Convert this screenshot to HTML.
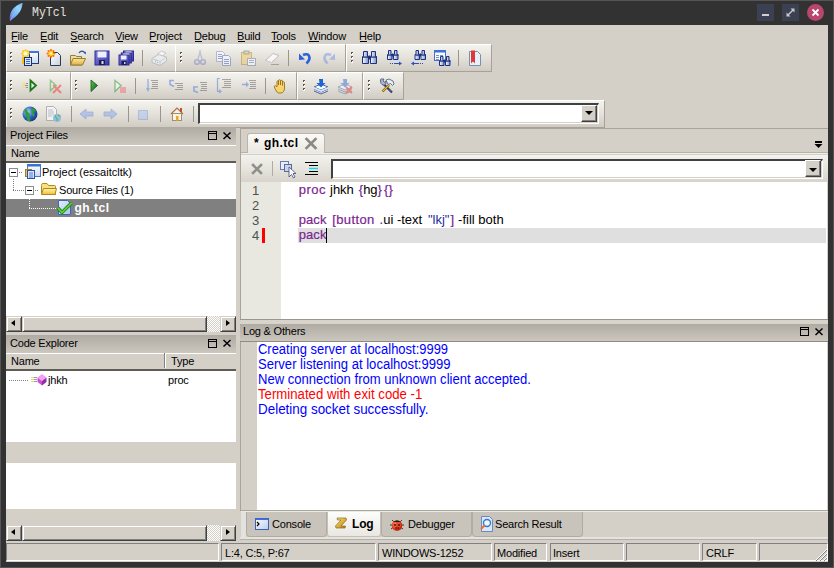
<!DOCTYPE html>
<html><head><meta charset="utf-8">
<style>
*{box-sizing:border-box;margin:0;padding:0}
html,body{width:834px;height:568px;overflow:hidden;background:#323232;font-family:"Liberation Sans",sans-serif;font-size:11px;color:#000}
div,span,svg{position:absolute}
.t{white-space:nowrap;line-height:1;letter-spacing:-.2px}
.tb{background:linear-gradient(#f5f3ef,#e4e1da 50%,#d0ccc4);border-top:1px solid #fff;border-left:1px solid #fff;border-bottom:1px solid #a6a299;border-right:1px solid #a6a299}
.grip{width:3px;height:12px;background:repeating-linear-gradient(#6f6b64 0 2px,transparent 2px 4px)}
.sep{width:2px;height:17px;border-left:1px solid #aca89f;border-right:1px solid #fff}
.dh{background:linear-gradient(#afaba3,#cbc7bf)}
.hdr{background:#d4d0c8;border-top:1px solid #fff;border-bottom:2px solid #5f5c56}
.sunk{border-top:1px solid #808080;border-left:1px solid #808080;border-right:1px solid #fff;border-bottom:1px solid #fff}
.raised{background:#d4d0c8;border-top:1px solid #fff;border-left:1px solid #fff;border-right:1px solid #404040;border-bottom:1px solid #404040;box-shadow:inset -1px -1px #808080}
.combo{background:#fff;border-top:2px solid #404040;border-left:2px solid #404040;border-right:1px solid #fff;border-bottom:1px solid #fff;box-shadow:inset -1px -1px #d4d0c8}
.arrow{width:0;height:0;border-left:4px solid transparent;border-right:4px solid transparent;border-top:4px solid #000}
.b3{background:#d4d0c8;border:1px solid;border-color:#d4d0c8 #404040 #404040 #d4d0c8;box-shadow:inset 1px 1px #fff,inset -1px -1px #808080}
.chk{background-color:#fff;background-image:linear-gradient(45deg,#d4d0c8 25%,transparent 25%,transparent 75%,#d4d0c8 75%),linear-gradient(45deg,#d4d0c8 25%,transparent 25%,transparent 75%,#d4d0c8 75%);background-size:2px 2px;background-position:0 0,1px 1px}
.kw{color:#7b2b8c;font-weight:bold}
.cd{font-size:13px;letter-spacing:0}
.k{font-weight:normal;-webkit-text-stroke:.2px #7b2590;letter-spacing:.1px}
.log{letter-spacing:0;font-size:14px;color:#0000ff;transform:scaleX(.925);transform-origin:0 0}
</style></head><body>
<!-- outer frame -->
<div style="left:0;top:0;width:834px;height:568px;border:1px solid #555;background:#323232"></div>
<!-- title -->
<svg style="left:0;top:0" width="30" height="25" viewBox="0 0 30 25"><defs><linearGradient id="fg" x1="0" y1="1" x2="1" y2="0"><stop offset="0" stop-color="#7040d0"/><stop offset=".25" stop-color="#68a8f0"/><stop offset=".7" stop-color="#90d8ff"/><stop offset="1" stop-color="#60b8f0"/></linearGradient></defs><path d="M10 21 C9 16 11 10 15 7 C17.5 5 20 3.5 22.5 3 C22.5 6 21.5 9 20 11.5 C18 15 14 18 10 21 Z" fill="url(#fg)"/><path d="M10.5 20.5 C13 15 17 9 22 3.5" stroke="#c0b8e8" stroke-width=".8" fill="none" opacity=".8"/></svg>
<span class="t" style="left:32px;top:6px;font-family:'Liberation Mono',monospace;font-size:13.5px;letter-spacing:0;color:#e6e2dc;transform:scaleX(.85);transform-origin:0 0">MyTcl</span>
<div style="left:757px;top:4px;width:17px;height:17px;background:#3b4152"></div>
<div style="left:762px;top:14px;width:7px;height:2px;background:#d0d0d0"></div>
<div style="left:782px;top:4px;width:17px;height:17px;background:#3b4152"></div>
<svg style="left:782px;top:4px" width="17" height="17"><path d="M5.5 11.5 L11.5 5.5" stroke="#c8c8c8" stroke-width="1.4"/><path d="M8.5 4.5 H12.5 V8.5 Z M4.5 8.5 V12.5 H8.5 Z" fill="#c8c8c8"/></svg>
<div style="left:807px;top:4px;width:17px;height:17px;border-radius:50%;background:#b8466e"></div>
<svg style="left:807px;top:4px" width="17" height="17"><path d="M5.5 5.5 L11.5 11.5 M11.5 5.5 L5.5 11.5" stroke="#fff" stroke-width="1.8"/></svg>

<!-- window body -->
<div style="left:6px;top:25px;width:822px;height:537px;background:#d4d0c8"></div>

<!-- menubar -->
<span class="t" style="left:11px;top:31px">File</span>
<span class="t" style="left:40px;top:31px">Edit</span>
<span class="t" style="left:70px;top:31px">Search</span>
<span class="t" style="left:115px;top:31px">View</span>
<span class="t" style="left:149px;top:31px">Project</span>
<span class="t" style="left:194px;top:31px">Debug</span>
<span class="t" style="left:237px;top:31px">Build</span>
<span class="t" style="left:271px;top:31px">Tools</span>
<span class="t" style="left:308px;top:31px">Window</span>
<span class="t" style="left:359px;top:31px">Help</span>

<div style="left:12px;top:41px;width:6px;height:1px;background:#000"></div><div style="left:41px;top:41px;width:6px;height:1px;background:#000"></div><div style="left:71px;top:41px;width:7px;height:1px;background:#000"></div><div style="left:116px;top:41px;width:7px;height:1px;background:#000"></div><div style="left:150px;top:41px;width:7px;height:1px;background:#000"></div><div style="left:195px;top:41px;width:7px;height:1px;background:#000"></div><div style="left:238px;top:41px;width:7px;height:1px;background:#000"></div><div style="left:272px;top:41px;width:7px;height:1px;background:#000"></div><div style="left:309px;top:41px;width:10px;height:1px;background:#000"></div><div style="left:360px;top:41px;width:7px;height:1px;background:#000"></div>
<!-- toolbars row1 -->
<div class="tb" style="left:6px;top:44px;width:170px;height:28px"></div>
<div class="tb" style="left:175px;top:44px;width:171px;height:28px"></div>
<div class="tb" style="left:346px;top:44px;width:146px;height:28px"></div>
<!-- row2 -->
<div class="tb" style="left:6px;top:72px;width:65px;height:28px"></div>
<div class="tb" style="left:71px;top:72px;width:226px;height:28px"></div>
<div class="tb" style="left:297px;top:72px;width:66px;height:28px"></div>
<div class="tb" style="left:363px;top:72px;width:41px;height:28px"></div>
<!-- row3 -->
<div class="tb" style="left:6px;top:100px;width:599px;height:28px"></div>
<div class="combo" style="left:198px;top:103px;width:401px;height:21px"></div>
<div class="raised" style="left:581px;top:105px;width:16px;height:17px"></div>
<div class="arrow" style="left:585px;top:111px"></div>

<!-- LEFT DOCK: Project Files -->
<div class="dh" style="left:6px;top:127px;width:230px;height:18px"></div>
<span class="t" style="left:10px;top:130px">Project Files</span>
<div class="hdr" style="left:6px;top:145px;width:230px;height:18px"></div>
<span class="t" style="left:11px;top:148px">Name</span>
<div style="left:6px;top:163px;width:230px;height:153px;background:#fff"></div>
<div style="left:6px;top:199px;width:230px;height:18px;background:#808080"></div>
<span class="t" style="left:42px;top:167px;letter-spacing:0">Project (essaitcltk)</span>
<span class="t" style="left:59px;top:185px">Source Files (1)</span>
<span class="t" style="left:74.5px;top:202px;font-weight:bold;font-size:12px;color:#fff;letter-spacing:.5px">gh.tcl</span>
<!-- hscroll 1 -->
<div class="chk" style="left:6px;top:316px;width:230px;height:16px;background:#d4d0c8"></div><div class="chk" style="left:206px;top:316px;width:15px;height:16px"></div><div class="b3" style="left:6px;top:316px;width:16px;height:16px"></div><div style="left:11px;top:320px;width:0;height:0;border-top:3.5px solid transparent;border-bottom:3.5px solid transparent;border-right:4px solid #000"></div><div class="b3" style="left:22px;top:316px;width:185px;height:16px"></div><div class="b3" style="left:220px;top:316px;width:16px;height:16px"></div><div style="left:226px;top:320px;width:0;height:0;border-top:3.5px solid transparent;border-bottom:3.5px solid transparent;border-left:4px solid #000"></div>
<div class="chk" style="left:6px;top:525px;width:230px;height:16px;background:#d4d0c8"></div><div class="chk" style="left:206px;top:525px;width:15px;height:16px"></div><div class="b3" style="left:6px;top:525px;width:16px;height:16px"></div><div style="left:11px;top:529px;width:0;height:0;border-top:3.5px solid transparent;border-bottom:3.5px solid transparent;border-right:4px solid #000"></div><div class="b3" style="left:22px;top:525px;width:185px;height:16px"></div><div class="b3" style="left:220px;top:525px;width:16px;height:16px"></div><div style="left:226px;top:529px;width:0;height:0;border-top:3.5px solid transparent;border-bottom:3.5px solid transparent;border-left:4px solid #000"></div>


<!-- LEFT DOCK: Code Explorer -->
<div class="dh" style="left:6px;top:335px;width:230px;height:18px"></div>
<span class="t" style="left:10px;top:338px">Code Explorer</span>
<div class="hdr" style="left:6px;top:353px;width:230px;height:18px"></div>
<span class="t" style="left:11px;top:356px">Name</span>
<span class="t" style="left:171px;top:356px">Type</span>
<div style="left:6px;top:371px;width:230px;height:71px;background:#fff"></div>
<span class="t" style="left:48px;top:375px">jhkh</span>
<span class="t" style="left:168px;top:375px">proc</span>
<div style="left:6px;top:463px;width:230px;height:46px;background:#fff"></div>

<!-- EDITOR -->
<div style="left:240px;top:128px;width:588px;height:1px;background:#a8a49c"></div>
<div style="left:240px;top:128px;width:1px;height:191px;background:#a8a49c"></div>
<div style="left:241px;top:152px;width:587px;height:1px;background:#b8b2a6"></div>
<div style="left:241px;top:153px;width:587px;height:1px;background:#f0eee8"></div>
<!-- tab -->
<div style="left:247px;top:133px;width:78px;height:20px;background:linear-gradient(#fbfaf7,#ebe8e1);border:1px solid #b9b5ac;border-bottom:none;border-radius:3px 3px 0 0"></div>
<span class="t" style="left:254px;top:137px;font-weight:bold;font-size:12px">*</span><span class="t" style="left:264px;top:137px;font-weight:bold;font-size:12px;letter-spacing:.4px">gh.tcl</span>
<!-- editor toolbar -->
<div style="left:241px;top:155px;width:587px;height:27px;background:linear-gradient(#f4f2ee,#e4e1da 60%,#d8d4cc)"></div>
<div class="combo" style="left:331px;top:159px;width:492px;height:20px"></div>
<div class="raised" style="left:805px;top:160px;width:16px;height:17px"></div>
<div class="arrow" style="left:809px;top:168px"></div>
<!-- code -->
<div style="left:241px;top:182px;width:586px;height:137px;background:#fff"></div>
<div style="left:241px;top:182px;width:40px;height:137px;background:#e8e7e0"></div>
<div style="left:298px;top:228px;width:528px;height:15px;background:#dfdfdf"></div>
<div style="left:262px;top:228px;width:3px;height:15px;background:#f00"></div>
<span class="t" style="left:252px;top:184px;font-size:13px;color:#505050">1</span>
<span class="t" style="left:252px;top:199px;font-size:13px;color:#505050">2</span>
<span class="t" style="left:252px;top:214px;font-size:13px;color:#505050">3</span>
<span class="t" style="left:252px;top:229px;font-size:13px;color:#505050">4</span>
<span class="t cd k" style="left:298.8px;top:183px;color:#7b2590;letter-spacing:.5px">proc</span>
<span class="t cd" style="left:330px;top:183px;color:#000">jhkh</span>
<span class="t cd" style="left:358.7px;top:183px;color:#7b2590"><b class="k">{</b><span style="position:static;color:#000">hg</span><b class="k">}</b></span>
<span class="t cd k" style="left:384px;top:183px;color:#7b2590">{}</span>
<span class="t cd k" style="left:298.7px;top:213px;color:#7b2590">pack</span>
<span class="t cd k" style="left:332.2px;top:213px;color:#7b2590;letter-spacing:.4px">[button</span>
<span class="t cd" style="left:379.5px;top:213px;color:#7b2590"><b class="k">.</b><span style="position:static;color:#000">ui</span></span>
<span class="t cd" style="left:396.9px;top:213px;color:#000">-text</span>
<span class="t cd" style="left:427.9px;top:213px;color:#1c2c9c">&quot;lkj&quot;</span>
<span class="t cd k" style="left:450.4px;top:213px;color:#7b2590">]</span>
<span class="t cd" style="left:458.1px;top:213px;color:#000">-fill both</span>
<span class="t cd k" style="left:298.7px;top:228px;color:#7b2590">pack</span>
<div style="left:326px;top:228px;width:1px;height:15px;background:#000"></div>

<!-- LOG & OTHERS -->
<div style="left:240px;top:319px;width:588px;height:1px;background:#9a968e"></div><div style="left:240px;top:320px;width:588px;height:4px;background:#d8d4cc"></div><div class="dh" style="left:240px;top:324px;width:588px;height:17px"></div>
<span class="t" style="left:243px;top:326px">Log &amp; Others</span>
<div style="left:240px;top:341px;width:588px;height:1px;background:#8e8a84"></div>
<div style="left:241px;top:342px;width:586px;height:168px;background:#fff"></div>
<div style="left:241px;top:342px;width:16px;height:168px;background:#d4d0c8"></div><div style="left:240px;top:342px;width:1px;height:168px;background:#a8a49c"></div>
<span class="t log" style="transform:scaleX(0.9250);left:258px;top:342px">Creating server at localhost:9999</span>
<span class="t log" style="transform:scaleX(0.9333);left:258px;top:357px">Server listening at localhost:9999</span>
<span class="t log" style="transform:scaleX(0.9324);left:258px;top:372px">New connection from unknown client accepted.</span>
<span class="t log" style="transform:scaleX(0.9426);left:258px;top:387px;color:#ff0000">Terminated with exit code -1</span>
<span class="t log" style="transform:scaleX(0.9583);left:258px;top:402px">Deleting socket successfully.</span>

<!-- bottom tabs -->
<div style="left:240px;top:510px;width:588px;height:1px;background:#aaa69e"></div>
<div style="left:241px;top:511px;width:587px;height:1px;background:#ebe9e3"></div>
<div style="left:241px;top:512px;width:5px;height:26px;background:#e4e2dc"></div>
<div style="left:240px;top:537px;width:588px;height:2px;background:#e6e3dd"></div>
<div style="left:240px;top:539px;width:588px;height:1px;background:#b5b1a9"></div>
<div style="left:246px;top:512px;width:81px;height:25px;background:#c8c4bb;border-radius:0 0 4px 4px;border:1px solid #b0aca3;border-top:none"></div>
<div style="left:381px;top:512px;width:91px;height:25px;background:#c8c4bb;border-radius:0 0 4px 4px;border:1px solid #b0aca3;border-top:none"></div>
<div style="left:472px;top:512px;width:111px;height:25px;background:#c8c4bb;border-radius:0 0 4px 4px;border:1px solid #b0aca3;border-top:none"></div>
<div style="left:327px;top:512px;width:54px;height:25px;background:linear-gradient(#fdfdfb,#e9e7e1);border-radius:0 0 3px 3px;border:1px solid #c4c0b8;border-top:none"></div>
<span class="t" style="left:272px;top:519px">Console</span>
<span class="t" style="left:352px;top:518px;font-weight:bold;font-size:12px">Log</span>
<span class="t" style="left:408px;top:519px">Debugger</span>
<span class="t" style="left:495px;top:519px">Search Result</span>
<!-- status bar -->
<div class="sunk" style="left:6px;top:543px;width:213px;height:18px"></div>
<div class="sunk" style="left:221px;top:543px;width:155px;height:18px"></div>
<div class="sunk" style="left:378px;top:543px;width:114px;height:18px"></div>
<div class="sunk" style="left:494px;top:543px;width:53px;height:18px"></div>
<div class="sunk" style="left:550px;top:543px;width:74px;height:18px"></div>
<div class="sunk" style="left:626px;top:543px;width:74px;height:18px"></div>
<div class="sunk" style="left:702px;top:543px;width:55px;height:18px"></div>
<div class="sunk" style="left:759px;top:543px;width:69px;height:18px"></div>
<span class="t" style="left:225px;top:548px">L:4, C:5, P:67</span>
<span class="t" style="left:382px;top:548px">WINDOWS-1252</span>
<span class="t" style="left:497px;top:548px">Modified</span>
<span class="t" style="left:553px;top:548px">Insert</span>
<span class="t" style="left:706px;top:548px">CRLF</span>
<svg style="left:0;top:0" width="834" height="568"><path d="M10 52h2v1h-1v1h-1z" fill="#5a5650"/><rect x="11" y="53" width="1" height="1" fill="#fff"/><rect x="10" y="54" width="2" height="1" fill="#fff" opacity=".8"/><path d="M10 56h2v1h-1v1h-1z" fill="#5a5650"/><rect x="11" y="57" width="1" height="1" fill="#fff"/><rect x="10" y="58" width="2" height="1" fill="#fff" opacity=".8"/><path d="M10 60h2v1h-1v1h-1z" fill="#5a5650"/><rect x="11" y="61" width="1" height="1" fill="#fff"/><rect x="10" y="62" width="2" height="1" fill="#fff" opacity=".8"/><path d="M180 52h2v1h-1v1h-1z" fill="#5a5650"/><rect x="181" y="53" width="1" height="1" fill="#fff"/><rect x="180" y="54" width="2" height="1" fill="#fff" opacity=".8"/><path d="M180 56h2v1h-1v1h-1z" fill="#5a5650"/><rect x="181" y="57" width="1" height="1" fill="#fff"/><rect x="180" y="58" width="2" height="1" fill="#fff" opacity=".8"/><path d="M180 60h2v1h-1v1h-1z" fill="#5a5650"/><rect x="181" y="61" width="1" height="1" fill="#fff"/><rect x="180" y="62" width="2" height="1" fill="#fff" opacity=".8"/><path d="M351 52h2v1h-1v1h-1z" fill="#5a5650"/><rect x="352" y="53" width="1" height="1" fill="#fff"/><rect x="351" y="54" width="2" height="1" fill="#fff" opacity=".8"/><path d="M351 56h2v1h-1v1h-1z" fill="#5a5650"/><rect x="352" y="57" width="1" height="1" fill="#fff"/><rect x="351" y="58" width="2" height="1" fill="#fff" opacity=".8"/><path d="M351 60h2v1h-1v1h-1z" fill="#5a5650"/><rect x="352" y="61" width="1" height="1" fill="#fff"/><rect x="351" y="62" width="2" height="1" fill="#fff" opacity=".8"/><path d="M10 80h2v1h-1v1h-1z" fill="#5a5650"/><rect x="11" y="81" width="1" height="1" fill="#fff"/><rect x="10" y="82" width="2" height="1" fill="#fff" opacity=".8"/><path d="M10 84h2v1h-1v1h-1z" fill="#5a5650"/><rect x="11" y="85" width="1" height="1" fill="#fff"/><rect x="10" y="86" width="2" height="1" fill="#fff" opacity=".8"/><path d="M10 88h2v1h-1v1h-1z" fill="#5a5650"/><rect x="11" y="89" width="1" height="1" fill="#fff"/><rect x="10" y="90" width="2" height="1" fill="#fff" opacity=".8"/><path d="M75 80h2v1h-1v1h-1z" fill="#5a5650"/><rect x="76" y="81" width="1" height="1" fill="#fff"/><rect x="75" y="82" width="2" height="1" fill="#fff" opacity=".8"/><path d="M75 84h2v1h-1v1h-1z" fill="#5a5650"/><rect x="76" y="85" width="1" height="1" fill="#fff"/><rect x="75" y="86" width="2" height="1" fill="#fff" opacity=".8"/><path d="M75 88h2v1h-1v1h-1z" fill="#5a5650"/><rect x="76" y="89" width="1" height="1" fill="#fff"/><rect x="75" y="90" width="2" height="1" fill="#fff" opacity=".8"/><path d="M303 80h2v1h-1v1h-1z" fill="#5a5650"/><rect x="304" y="81" width="1" height="1" fill="#fff"/><rect x="303" y="82" width="2" height="1" fill="#fff" opacity=".8"/><path d="M303 84h2v1h-1v1h-1z" fill="#5a5650"/><rect x="304" y="85" width="1" height="1" fill="#fff"/><rect x="303" y="86" width="2" height="1" fill="#fff" opacity=".8"/><path d="M303 88h2v1h-1v1h-1z" fill="#5a5650"/><rect x="304" y="89" width="1" height="1" fill="#fff"/><rect x="303" y="90" width="2" height="1" fill="#fff" opacity=".8"/><path d="M368 80h2v1h-1v1h-1z" fill="#5a5650"/><rect x="369" y="81" width="1" height="1" fill="#fff"/><rect x="368" y="82" width="2" height="1" fill="#fff" opacity=".8"/><path d="M368 84h2v1h-1v1h-1z" fill="#5a5650"/><rect x="369" y="85" width="1" height="1" fill="#fff"/><rect x="368" y="86" width="2" height="1" fill="#fff" opacity=".8"/><path d="M368 88h2v1h-1v1h-1z" fill="#5a5650"/><rect x="369" y="89" width="1" height="1" fill="#fff"/><rect x="368" y="90" width="2" height="1" fill="#fff" opacity=".8"/><path d="M10 108h2v1h-1v1h-1z" fill="#5a5650"/><rect x="11" y="109" width="1" height="1" fill="#fff"/><rect x="10" y="110" width="2" height="1" fill="#fff" opacity=".8"/><path d="M10 112h2v1h-1v1h-1z" fill="#5a5650"/><rect x="11" y="113" width="1" height="1" fill="#fff"/><rect x="10" y="114" width="2" height="1" fill="#fff" opacity=".8"/><path d="M10 116h2v1h-1v1h-1z" fill="#5a5650"/><rect x="11" y="117" width="1" height="1" fill="#fff"/><rect x="10" y="118" width="2" height="1" fill="#fff" opacity=".8"/><rect x="142" y="50" width="1" height="16" fill="#9a968e"/><rect x="288" y="50" width="1" height="16" fill="#9a968e"/><rect x="458" y="50" width="1" height="16" fill="#9a968e"/><rect x="135" y="78" width="1" height="16" fill="#9a968e"/><rect x="265" y="78" width="1" height="16" fill="#9a968e"/><rect x="71" y="106" width="1" height="16" fill="#9a968e"/><rect x="128" y="106" width="1" height="16" fill="#9a968e"/><rect x="160" y="106" width="1" height="16" fill="#9a968e"/><rect x="193" y="106" width="1" height="16" fill="#9a968e"/></svg>
<svg style="left:0;top:0" width="834" height="568" viewBox="0 0 834 568">
<defs>
<linearGradient id="gBlueWin" x1="0" y1="0" x2="0" y2="1"><stop offset="0" stop-color="#fff"/><stop offset="1" stop-color="#c8d8f0"/></linearGradient>
<linearGradient id="gPage" x1="0" y1="0" x2="1" y2="1"><stop offset="0" stop-color="#fff"/><stop offset="1" stop-color="#c8d0e0"/></linearGradient>
<linearGradient id="gFold" x1="0" y1="0" x2="0" y2="1"><stop offset="0" stop-color="#f8e8a0"/><stop offset="1" stop-color="#e0b040"/></linearGradient>
<linearGradient id="gFloppy" x1="0" y1="0" x2="1" y2="1"><stop offset="0" stop-color="#8080e0"/><stop offset="1" stop-color="#3838a8"/></linearGradient>
<linearGradient id="gBino" x1="0" y1="0" x2="1" y2="0"><stop offset="0" stop-color="#fff"/><stop offset="1" stop-color="#7890c8"/></linearGradient>
<radialGradient id="gGlobe" cx=".35" cy=".35" r=".7"><stop offset="0" stop-color="#a8d0ff"/><stop offset=".6" stop-color="#2860c0"/><stop offset="1" stop-color="#183880"/></radialGradient>
<linearGradient id="gRun" x1="0" y1="0" x2="1" y2="1"><stop offset="0" stop-color="#60c060"/><stop offset="1" stop-color="#0a600a"/></linearGradient>
</defs>
<!-- grips -->
<g id="grips" fill="#6e6a62">
</g>
<!-- ROW1 -->
<!-- new project -->
<g transform="translate(20,48)">
 <rect x="9.5" y="3.5" width="9" height="12" fill="url(#gBlueWin)" stroke="#233a78"/>
 <rect x="9" y="3" width="10" height="2" fill="#3a78e0"/>
 <rect x="2" y="9" width="2.5" height="7" fill="#f0c020"/>
 <circle cx="5.5" cy="5.5" r="2.4000000000000004" fill="#fff0a0"/><circle cx="8.70" cy="5.50" r="1.1" fill="#f8c800"/><circle cx="7.76" cy="7.76" r="1.1" fill="#f8c800"/><circle cx="5.50" cy="8.70" r="1.1" fill="#f8c800"/><circle cx="3.24" cy="7.76" r="1.1" fill="#f8c800"/><circle cx="2.30" cy="5.50" r="1.1" fill="#f8c800"/><circle cx="3.24" cy="3.24" r="1.1" fill="#f8c800"/><circle cx="5.50" cy="2.30" r="1.1" fill="#f8c800"/><circle cx="7.76" cy="3.24" r="1.1" fill="#f8c800"/><circle cx="5.5" cy="5.5" r="1.2" fill="#fff"/>
 <rect x="4.5" y="9.5" width="7" height="8" fill="#dce8fa" stroke="#1c3070"/>
 <path d="M6 11.5h4M6 13.5h4M6 15.5h4" stroke="#3a6ad8"/>
</g>
<!-- new file -->
<g transform="translate(46,48)">
 <path d="M4.5 4.5h7l3 3v10h-10z" fill="url(#gPage)" stroke="#2a3a58"/>
 <circle cx="5" cy="5.5" r="2.55" fill="#ffd000"/><circle cx="8.40" cy="5.50" r="1.1" fill="#ff7000"/><circle cx="7.40" cy="7.90" r="1.1" fill="#ff7000"/><circle cx="5.00" cy="8.90" r="1.1" fill="#ff7000"/><circle cx="2.60" cy="7.90" r="1.1" fill="#ff7000"/><circle cx="1.60" cy="5.50" r="1.1" fill="#ff7000"/><circle cx="2.60" cy="3.10" r="1.1" fill="#ff7000"/><circle cx="5.00" cy="2.10" r="1.1" fill="#ff7000"/><circle cx="7.40" cy="3.10" r="1.1" fill="#ff7000"/><circle cx="5" cy="5.5" r="1.2" fill="#fff8c0"/>
</g>
<!-- open -->
<g transform="translate(70,50)">
 <path d="M0.5 5.5h5l1 1h5v8.5h-11z" fill="#f4dc90" stroke="#8c7c50"/>
 <path d="M3 8.5h12.5l-3 6.5h-12z" fill="url(#gFold)" stroke="#9a7a30"/>
 <path d="M9 3 C10.5 0.5 13.5 0.5 15 3" stroke="#2850a0" stroke-width="1.2" fill="none"/>
 <path d="M13.5 2.5 L15.8 4.5 L15.8 1.8z" fill="#2850a0"/>
</g>
<!-- save -->
<g transform="translate(94,50)">
 <rect x="1" y="1" width="14" height="14" fill="url(#gFloppy)" stroke="#2c2c90"/>
 <rect x="3.5" y="1.5" width="9" height="6" fill="#eef0ff"/>
 <rect x="5" y="10" width="6" height="5" fill="#1c1c50"/><rect x="7.5" y="11" width="2" height="3" fill="#e0e0f0"/>
</g>
<!-- save all -->
<g transform="translate(118,50)">
 <rect x="5.5" y="1" width="10" height="10" fill="url(#gFloppy)" stroke="#2c2c90"/>
 <rect x="7.5" y="1.5" width="6" height="1.6" fill="#f0f0ff"/>
 <rect x="3.3" y="3" width="10" height="10" fill="url(#gFloppy)" stroke="#2c2c90"/>
 <rect x="5.3" y="3.5" width="6" height="1.6" fill="#f0f0ff"/>
 <rect x="1" y="5" width="10" height="10" fill="url(#gFloppy)" stroke="#2c2c90"/>
 <rect x="3" y="5.5" width="5.5" height="4" fill="#eef0ff"/>
 <rect x="3.5" y="11" width="5" height="4" fill="#1c1c50"/><rect x="6" y="12" width="1.5" height="2" fill="#d0d0e0"/>
</g>
<!-- print disabled -->
<g transform="translate(151,50)" opacity=".6">
 <path d="M6 4.5 L10.5 1 L15 3 L11 6.5z" fill="#fff" stroke="#a8b4c8"/>
 <path d="M1 8.5 L7.5 4.5 L15.5 7 L15.5 11 L9 15.5 L1 12.5 Z" fill="#eef2f8" stroke="#a0acc0"/>
 <path d="M1 8.5 L9 11.5 L15.5 7 M9 11.5 V15.5" stroke="#b8c4d4" fill="none"/>
 <path d="M3.5 9.5l1 .4M5.5 10.2l1 .4M4 11.5l1 .4M6 12.2l1 .4" stroke="#98a4b8"/>
</g>
<!-- cut disabled -->
<g transform="translate(192,50)" opacity=".4">
 <path d="M8.5 0.5 L6 9 M7.5 0.5 L10 9" stroke="#7888c0" stroke-width="1.2"/>
 <circle cx="5" cy="12" r="2.3" fill="none" stroke="#6070c0" stroke-width="1.6"/>
 <circle cx="11" cy="12" r="2.3" fill="none" stroke="#6070c0" stroke-width="1.6"/>
</g>
<!-- copy disabled -->
<g transform="translate(216,50)" opacity=".55">
 <path d="M0.5 1.5h6l2 2v8h-8z" fill="#fff" stroke="#8890c0"/>
 <path d="M6.5 5.5h6l2 2v8h-8z" fill="#fff" stroke="#6878c0"/>
 <path d="M2 4.5h4M2 6.5h4M2 8.5h4M8 9.5h5M8 11.5h5M8 13.5h5" stroke="#4a70e0"/>
</g>
<!-- paste disabled -->
<g transform="translate(240,50)" opacity=".55">
 <rect x="1.5" y="2.5" width="10" height="12" fill="#f0d070" stroke="#b09040"/>
 <rect x="4" y="1" width="5" height="3" fill="#c8c0a0" stroke="#807860"/>
 <rect x="7.5" y="8.5" width="8" height="7" fill="#fff" stroke="#7888b0"/>
 <path d="M9 10.5h5M9 12.5h5" stroke="#7090d0"/>
</g>
<!-- erase disabled -->
<g transform="translate(264,50)" opacity=".75">
 <path d="M1.5 10.5 L9 3.5 L15 5.5 L7.5 12.5 Z" fill="#fff" stroke="#b0b0b8"/>
 <path d="M1.5 10.5 L7.5 12.5 L7.5 13.5 L1.5 11.5z" fill="#d8d8e0"/>
 <path d="M7 14.5h8" stroke="#909090"/>
</g>
<!-- undo -->
<g transform="translate(297,50)">
 <path d="M6 5 C12 2 15 8 9.5 13.5" stroke="#2a62d8" stroke-width="2.6" fill="none"/>
 <path d="M2 3.5 L2 10 L8 9.5 Z" fill="#2a62d8"/>
</g>
<!-- redo disabled -->
<g transform="translate(321,50)" opacity=".45">
 <path d="M10 5 C4 2 1 8 6.5 13.5" stroke="#6a8ae8" stroke-width="2.6" fill="none"/>
 <path d="M14 3.5 L14 10 L8 9.5 Z" fill="#6a8ae8"/>
</g>
<!-- find -->
<g><path d="M363.5 51.5h4v5h1v7h-6v-7h1z" fill="url(#gBino)" stroke="#1c3080"/><rect x="363" y="56.5" width="6" height="1.2" fill="#1c3080"/><path d="M371.5 51.5h4v5h1v7h-6v-7h1z" fill="url(#gBino)" stroke="#1c3080"/><rect x="371" y="56.5" width="6" height="1.2" fill="#1c3080"/><rect x="368.5" y="55.55" width="2" height="3.9" fill="#1c3080"/></g>
<!-- find next -->
<g><path d="M388.5 50.5h2.5v4h1v5h-4.5v-5h1z" fill="url(#gBino)" stroke="#1c3080"/><rect x="388.0" y="54.5" width="4.5" height="1.2" fill="#1c3080"/><path d="M394.5 50.5h2.5v4h1v5h-4.5v-5h1z" fill="url(#gBino)" stroke="#1c3080"/><rect x="394.0" y="54.5" width="4.5" height="1.2" fill="#1c3080"/><rect x="392.0" y="53.5" width="1.5" height="3.0" fill="#1c3080"/>
 <path d="M390 63.5h1M392 63.5h1M394 63.5h5" stroke="#2850c0"/><path d="M399 61.5 L402 63.5 L399 65.5z" fill="#2850c0"/>
</g>
<!-- find prev -->
<g><path d="M416.0 50.5h2.5v4h1v5h-4.5v-5h1z" fill="url(#gBino)" stroke="#1c3080"/><rect x="415.5" y="54.5" width="4.5" height="1.2" fill="#1c3080"/><path d="M422.0 50.5h2.5v4h1v5h-4.5v-5h1z" fill="url(#gBino)" stroke="#1c3080"/><rect x="421.5" y="54.5" width="4.5" height="1.2" fill="#1c3080"/><rect x="419.5" y="53.5" width="1.5" height="3.0" fill="#1c3080"/>
 <path d="M414 63.5h5M420 63.5h1M422 63.5h1" stroke="#2850c0"/><path d="M414 61.5 L411 63.5 L414 65.5z" fill="#2850c0"/>
</g>
<!-- find in files -->
<g transform="translate(434,50)">
 <rect x="0.5" y="0.5" width="11" height="10" fill="#f4f8ff" stroke="#4870c8"/>
 <rect x="0.5" y="0.5" width="11" height="2" fill="#3a70e0"/>
 <path d="M2 5.5h3M6 5.5h3M2 7.5h3M6 7.5h3M2 9.5h3" stroke="#8090b8"/>
</g>
<g><path d="M440.5 56.5h2.5v4h1v5h-4.5v-5h1z" fill="url(#gBino)" stroke="#1c3080"/><rect x="440.0" y="60.5" width="4.5" height="1.2" fill="#1c3080"/><path d="M446.5 56.5h2.5v4h1v5h-4.5v-5h1z" fill="url(#gBino)" stroke="#1c3080"/><rect x="446.0" y="60.5" width="4.5" height="1.2" fill="#1c3080"/><rect x="444.0" y="59.5" width="1.5" height="3.0" fill="#1c3080"/></g>
<!-- bookmark -->
<g transform="translate(467,50)">
 <path d="M2.5 1.5h8l3 3v11h-11z" fill="#e8f0fa" stroke="#7890b0"/>
 <path d="M4 0.5h4v13l-2-2l-2 2z" fill="#e03838"/>
</g>
</svg>
<svg style="left:0;top:0" width="834" height="568" viewBox="0 0 834 568">
<!-- ROW2 -->
<!-- step -->
<g transform="translate(21,78)">
 <path d="M2 5.5h3M1 7.5h3M2 9.5h3" stroke="#f0e060" stroke-width="1.2"/>
 <path d="M5 5.5h2M4 7.5h3M5 9.5h2" stroke="#8890b0" stroke-width="1.2"/>
 <path d="M9.5 2.5 L15 7.5 L9.5 12.5 Z" fill="#fff" fill-opacity=".4" stroke="#187818" stroke-width="1.8" stroke-linejoin="miter"/>
</g>
<!-- debug disabled -->
<g transform="translate(48,78)" opacity=".5">
 <path d="M2.5 2.5 L8 7.5 L2.5 12.5 Z" fill="#fff" stroke="#38a838" stroke-width="1.5"/>
 <path d="M5 7 L13 15 M13 7 L5 15" stroke="#f03030" stroke-width="2"/>
</g>
<!-- run -->
<g transform="translate(88,78)">
 <path d="M3 2 L9.5 7.5 L3 13.5 Z" fill="url(#gRun)" stroke="#0a5a0a" stroke-width=".8"/>
</g>
<!-- run to / stop disabled -->
<g transform="translate(112,78)" opacity=".5">
 <path d="M3 2.5 L9 7.5 L3 13.5 Z" fill="#fff" stroke="#389838" stroke-width="1.4"/>
 <rect x="8" y="9" width="6" height="6" fill="#f07080"/>
</g>
<!-- indent A -->
<g transform="translate(146,79)" opacity=".5">
 <path d="M5 1.5h7M6 3.5h6M6 5.5h6M6 7.5h6M5 9.5h7" stroke="#606060"/>
 <path d="M2 0v10" stroke="#5080e0" stroke-width="1.4"/><path d="M0 9l2 4l2-4z" fill="#5080e0"/>
</g>
<!-- indent B -->
<g transform="translate(168,78)" opacity=".5">
 <path d="M7 5.5h8M9 7.5h6M9 9.5h6M7 11.5h8" stroke="#606060"/>
 <path d="M1 2.5h5M2 2.5v4l4 2" stroke="#4a78e0" stroke-width="1.6" fill="none"/>
</g>
<!-- indent C -->
<g transform="translate(192,78)" opacity=".5">
 <path d="M8 4.5h7M9 6.5h6M9 8.5h6M9 10.5h6M8 12.5h7" stroke="#606060"/>
 <path d="M1 9h5M2 9v4l4 1.5" stroke="#4a78e0" stroke-width="1.6" fill="none"/>
</g>
<!-- indent D -->
<g transform="translate(216,77)" opacity=".5">
 <path d="M6 2.5h9M8 4.5h7M8 6.5h7M8 8.5h7M6 10.5h9" stroke="#606060"/>
 <path d="M4 1.5h-2.5v13h3" stroke="#4a78e0" stroke-width="1.2" fill="none"/><path d="M3 12l3 2.5l-3 2z" fill="#4a78e0"/>
</g>
<!-- indent E -->
<g transform="translate(241,78)" opacity=".5">
 <path d="M8 2.5h7M9 4.5h6M9 6.5h6M9 8.5h6M8 10.5h7" stroke="#606060"/>
 <path d="M1 6.5h5" stroke="#4a78e0" stroke-width="1.6"/><path d="M5 3.5l3 3l-3 3z" fill="#4a78e0"/>
</g>
<!-- hand -->
<g transform="translate(273,78)">
 <path d="M4 14 C2 11 1 9 1.5 8 C2 7 3 8 4 9 V3.5 C4 2.5 5.5 2.5 5.5 3.5 V7 V2.5 C5.5 1.5 7.5 1.5 7.5 2.5 V7 V3 C7.5 2 9.5 2 9.5 3 V7.5 V4.5 C9.5 3.5 11.5 3.5 11.5 4.5 V10 C11.5 13 10 15 8 15 H5.5 Z" fill="#f6d470" stroke="#9a7018" stroke-width=".9"/>
</g>
<!-- import -->
<g transform="translate(313,78)">
 <path d="M1 9 L8 6 L15 9 L8 12 Z" fill="#fff" stroke="#4a6aa0"/>
 <path d="M1 11 L8 14 L15 11" fill="none" stroke="#4a6aa0"/>
 <path d="M1 13 L8 16 L15 13" fill="none" stroke="#4a6aa0"/>
 <path d="M1 9 L8 12 L15 9 L15 11 L8 14 L1 11z" fill="#d8e4f8" />
 <path d="M6 1h4v4h2.5l-4.5 4.5l-4.5-4.5h3z" fill="#1c64d8"/>
</g>
<!-- remove disabled -->
<g transform="translate(337,78)" opacity=".45">
 <path d="M1 9 L8 6 L15 9 L8 12 Z" fill="#fff" stroke="#4a6aa0"/>
 <path d="M1 11 L8 14 L15 11M1 13 L8 16 L15 13" fill="none" stroke="#4a6aa0"/>
 <path d="M6 1h4v4h2.5l-4.5 4.5l-4.5-4.5h3z" fill="#1c64d8"/>
 <path d="M9 9 L15 15 M15 9 L9 15" stroke="#f02020" stroke-width="1.8"/>
</g>
<!-- tools -->
<g transform="translate(376,76)">
 <path d="M8 8.5 L16 16.5" stroke="#1c2c58" stroke-width="2.2"/>
 <path d="M8 8.5 L16 16.5" stroke="#e8f0ff" stroke-width=".7" stroke-dasharray="1 1"/>
 <path d="M4.5 5 C4 3.5 5 2.5 6.5 3 L8 3 L7 5 L9 6.5 L10 5 L10 7 C10 8.5 8.5 9.5 7 9 C5.5 8.5 4.5 7 4.5 5z" fill="#a8b8d0" stroke="#405070" stroke-width=".8"/>
 <path d="M6.5 15.5 L13 9" stroke="#5a3a08" stroke-width="2.4"/>
 <path d="M6.5 15.5 L13 9" stroke="#f0c030" stroke-width="1.2"/>
 <path d="M10 4 L13 3 L17 5 L18 8 L16.5 9.5 L14.5 7.5 L12 8.5 Z" fill="#e8eef8" stroke="#5a6880" stroke-width=".9"/>
</g>
<!-- ROW3 -->
<g transform="translate(22,106)">
 <circle cx="8" cy="8" r="7.5" fill="url(#gGlobe)"/>
 <path d="M4 2.5 C6 4 5 6 7 7 C9 8 6 10 8 12 C9 13 8 15 7 15.5 L5 14 C6 12 4 10 3.5 8 C3 6 2 5 2.5 4z" fill="#30a030"/>
 <path d="M10 1.5 C11 3 13 3 14 5 C13 6 12 5 11 6 C12 8 13 9 12 11 C11 10 10 9 10 8 C9 6 9 4 10 1.5z" fill="#30a030"/>
</g>
<g transform="translate(45,106)" opacity=".75">
 <path d="M1.5 0.5h7l3 3v11h-10z" fill="#f8f8f8" stroke="#a0a0a8"/>
 <path d="M3 4h5M3 6h6M3 8h6M3 10h4" stroke="#a8b0c0"/>
 <circle cx="12" cy="12" r="4" fill="#70b8e8"/><path d="M10 9.5c1 1 0 2 1.5 2.5s0 2 1 3M13 8.5c0 1 2 1 2.5 2" stroke="#48a048" stroke-width="1.3" fill="none"/>
</g>
<g transform="translate(79,106)" opacity=".45">
 <path d="M1 8 L7 3 V6 H14 V10 H7 V13 Z" fill="#7aa0f0" stroke="#4a70c8" stroke-width=".8"/>
</g>
<g transform="translate(102,106)" opacity=".45">
 <path d="M15 8 L9 3 V6 H2 V10 H9 V13 Z" fill="#7aa0f0" stroke="#4a70c8" stroke-width=".8"/>
</g>
<g transform="translate(135,106)" opacity=".5">
 <rect x="3.5" y="4.5" width="9" height="9" fill="#a8c0f8" stroke="#8098d8"/>
</g>
<g transform="translate(169,106)">
 <path d="M2 8 L8 2 L14 8" fill="#f0f0f0" stroke="#b07040" stroke-width="1.2"/>
 <rect x="3.5" y="7.5" width="9" height="7" fill="#fcf4e0" stroke="#a09070"/>
 <rect x="7" y="10" width="2.5" height="4.5" fill="#e8a830"/>
 <rect x="11" y="2" width="2" height="4" fill="#c05030"/>
</g>
</svg>
<svg style="left:0;top:0" width="834" height="568" viewBox="0 0 834 568">
<defs>
<pattern id="dotG" width="2" height="2" patternUnits="userSpaceOnUse"><rect width="1" height="1" fill="#808080"/></pattern>
<pattern id="dotW" width="2" height="2" patternUnits="userSpaceOnUse"><rect width="1" height="1" fill="#fff"/></pattern>
<pattern id="checker" width="2" height="2" patternUnits="userSpaceOnUse"><rect width="2" height="2" fill="#d4d0c8"/><rect width="1" height="1" fill="#fff"/><rect x="1" y="1" width="1" height="1" fill="#fff"/></pattern>
<linearGradient id="gFolder" x1="0" y1="0" x2="0" y2="1"><stop offset="0" stop-color="#fff4b0"/><stop offset="1" stop-color="#f0c030"/></linearGradient>
<linearGradient id="gPageB" x1="0" y1="0" x2="1" y2="1"><stop offset="0" stop-color="#e8f0fc"/><stop offset="1" stop-color="#a8c4ec"/></linearGradient>
<linearGradient id="gCube" x1="0" y1="0" x2="1" y2="1"><stop offset="0" stop-color="#f0b0f8"/><stop offset="1" stop-color="#8030b0"/></linearGradient>
</defs>
<!-- dock header buttons -->
<g stroke="#000" fill="none">
 <rect x="208.5" y="131.5" width="8" height="8"/><path d="M209 133.5h7"/>
 <path d="M223.5 132.5l7 6.5M230.5 132.5l-7 6.5" stroke-width="1.5"/>
 <rect x="208.5" y="339.5" width="8" height="8"/><path d="M209 341.5h7"/>
 <path d="M223.5 340l7 6.5M230.5 340l-7 6.5" stroke-width="1.5"/>
 <rect x="800.5" y="327.5" width="8" height="8"/><path d="M801 329.5h7"/>
 <path d="M815.5 328.5l7 6.5M822.5 328.5l-7 6.5" stroke-width="1.5"/>
</g>
<!-- tree lines -->
<rect x="19" y="172" width="1" height="1" fill="#808080"/><rect x="21" y="172" width="1" height="1" fill="#808080"/><rect x="13" y="179" width="1" height="1" fill="#808080"/><rect x="13" y="181" width="1" height="1" fill="#808080"/><rect x="13" y="183" width="1" height="1" fill="#808080"/><rect x="13" y="185" width="1" height="1" fill="#808080"/><rect x="13" y="187" width="1" height="1" fill="#808080"/><rect x="13" y="189" width="1" height="1" fill="#808080"/><rect x="13" y="190" width="1" height="1" fill="#808080"/><rect x="15" y="190" width="1" height="1" fill="#808080"/><rect x="17" y="190" width="1" height="1" fill="#808080"/><rect x="19" y="190" width="1" height="1" fill="#808080"/><rect x="21" y="190" width="1" height="1" fill="#808080"/><rect x="23" y="190" width="1" height="1" fill="#808080"/><rect x="35" y="190" width="1" height="1" fill="#808080"/><rect x="37" y="190" width="1" height="1" fill="#808080"/><rect x="29" y="199" width="1" height="1" fill="#fff"/><rect x="29" y="201" width="1" height="1" fill="#fff"/><rect x="29" y="203" width="1" height="1" fill="#fff"/><rect x="29" y="205" width="1" height="1" fill="#fff"/><rect x="29" y="207" width="1" height="1" fill="#fff"/><rect x="29" y="208" width="1" height="1" fill="#fff"/><rect x="31" y="208" width="1" height="1" fill="#fff"/><rect x="33" y="208" width="1" height="1" fill="#fff"/><rect x="35" y="208" width="1" height="1" fill="#fff"/><rect x="37" y="208" width="1" height="1" fill="#fff"/><rect x="39" y="208" width="1" height="1" fill="#fff"/><rect x="41" y="208" width="1" height="1" fill="#fff"/><rect x="43" y="208" width="1" height="1" fill="#fff"/><rect x="45" y="208" width="1" height="1" fill="#fff"/><rect x="47" y="208" width="1" height="1" fill="#fff"/><rect x="49" y="208" width="1" height="1" fill="#fff"/><rect x="51" y="208" width="1" height="1" fill="#fff"/><rect x="53" y="208" width="1" height="1" fill="#fff"/><rect x="55" y="208" width="1" height="1" fill="#fff"/>
<!-- expander boxes -->
<rect x="9.5" y="168.5" width="8" height="8" fill="#fff" stroke="#8c8c8c"/><path d="M11 172.5h5" stroke="#000"/>
<rect x="25.5" y="186.5" width="8" height="8" fill="#fff" stroke="#8c8c8c"/><path d="M27 190.5h5" stroke="#000"/>
<!-- project icon -->
<g transform="translate(25,164)">
 <rect x="2.5" y="0.5" width="13" height="12" fill="url(#gBlueWin)" stroke="#4a78c8"/>
 <rect x="2.5" y="0.5" width="13" height="2" fill="#3070d8"/>
 <rect x="0.5" y="5.5" width="6" height="7" fill="#f0c040" stroke="#a08030"/>
 <rect x="2.5" y="6.5" width="7" height="8" fill="#dce8fa" stroke="#3050a0"/>
 <path d="M4 9h4M4 11h4M4 13h4" stroke="#4a78e0"/>
</g>
<!-- folder -->
<g transform="translate(41,183)">
 <path d="M0.5 2.5 C0.5 1 1 0.5 2 0.5 H6 L7.5 2.5 H13.5 C14.5 2.5 14.5 3 14.5 4 V11.5 H0.5 Z" fill="#f8e080" stroke="#b08820"/>
 <path d="M0.5 11.5 L2.5 5.5 H15.5 L14 11.5 Z" fill="url(#gFolder)" stroke="#b08820"/>
</g>
<!-- check file -->
<g transform="translate(57,200)">
 <path d="M1.5 0.5h9l3 3v11h-12z" fill="url(#gPageB)" stroke="#3a68c0"/>
 <path d="M1 8 L5 12.5 L14.5 3" stroke="#1a8a1a" stroke-width="3.4" fill="none"/>
 <path d="M1 8 L5 12.5 L14.5 3" stroke="#6ad040" stroke-width="1.6" fill="none"/>
</g>
<!-- code explorer item -->
<rect x="9" y="380" width="1" height="1" fill="#808080"/><rect x="11" y="380" width="1" height="1" fill="#808080"/><rect x="13" y="380" width="1" height="1" fill="#808080"/><rect x="15" y="380" width="1" height="1" fill="#808080"/><rect x="17" y="380" width="1" height="1" fill="#808080"/><rect x="19" y="380" width="1" height="1" fill="#808080"/><rect x="21" y="380" width="1" height="1" fill="#808080"/><rect x="23" y="380" width="1" height="1" fill="#808080"/><rect x="25" y="380" width="1" height="1" fill="#808080"/><rect x="27" y="380" width="1" height="1" fill="#808080"/>
<g>
 <path d="M31 377.5h3M31 379.5h3M31 381.5h3" stroke="#e8d870"/>
 <path d="M34 377.5h3M34 379.5h3M34 381.5h3" stroke="#8898b8"/>
 <path d="M42 374 L46.5 377.5 L42 381 L37.5 377.5 Z" fill="#f4a0f4"/>
 <path d="M37.5 377.5 L42 381 L42 385.5 L37.5 382 Z" fill="#d050d0"/>
 <path d="M42 381 L46.5 377.5 L46.5 382 L42 385.5 Z" fill="#9030a8"/>
</g>
<!-- column separator -->
<rect x="164" y="353" width="1" height="15" fill="#808080"/><rect x="165" y="353" width="1" height="15" fill="#fff"/>
</svg>
<svg style="left:0;top:0" width="834" height="568" viewBox="0 0 834 568">
<!-- tab close X gray -->
<path d="M306.5 139l9 9M315.5 139l-9 9" stroke="#8a8a86" stroke-width="2.6" stroke-linecap="square"/>
<!-- editor toolbar: gray X -->
<path d="M253 165l8 8M261 165l-8 8" stroke="#8e8e8a" stroke-width="2.6" stroke-linecap="square"/>
<rect x="272" y="161" width="1" height="15" fill="#b0aca4"/>
<!-- copy cursor icon -->
<g transform="translate(280,161)">
 <rect x="0.5" y="0.5" width="8" height="8" fill="#e8eef8" stroke="#6a7ab0"/>
 <rect x="4.5" y="3.5" width="7" height="7" fill="#c8d4ec" stroke="#5a6a98"/>
 <path d="M9 6 L9 16 L11.5 13.5 L13.5 17 L15 16 L13 12.5 L16 12.5 Z" fill="#fff" stroke="#3a4a80" stroke-width=".8"/>
</g>
<!-- indent lines with cyan -->
<g transform="translate(305,161)">
 <path d="M0 1.5h13M4 4.5h9M4 10.5h9M0 13.5h13" stroke="#000" stroke-width="1.2"/>
 <path d="M4 7.5h9" stroke="#00e0e8" stroke-width="1.4"/>
</g>
<!-- tab list dropdown -->
<rect x="815" y="141" width="7" height="2" fill="#000"/>
<path d="M814.5 144 L822.5 144 L818.5 148 Z" fill="#000"/>
</svg>
<svg style="left:0;top:0" width="834" height="568" viewBox="0 0 834 568">
<defs>
<linearGradient id="gCon" x1="0" y1="0" x2="1" y2="1"><stop offset="0" stop-color="#fff"/><stop offset="1" stop-color="#b8ccf0"/></linearGradient>
<linearGradient id="gGold" x1="0" y1="0" x2="1" y2="1"><stop offset="0" stop-color="#fff0a0"/><stop offset=".5" stop-color="#e0b040"/><stop offset="1" stop-color="#a07010"/></linearGradient>
<radialGradient id="gBug" cx=".4" cy=".4" r=".7"><stop offset="0" stop-color="#ff9060"/><stop offset=".7" stop-color="#e03010"/><stop offset="1" stop-color="#902000"/></radialGradient>
</defs>
<!-- console -->
<g transform="translate(255,518)">
 <rect x="0.5" y="0.5" width="13" height="11" fill="url(#gCon)" stroke="#3a62b8"/>
 <rect x="0.5" y="0.5" width="13" height="1.5" fill="#3a70d8"/>
 <path d="M2 4 L4 6 L2 8" stroke="#000" stroke-width="1.2" fill="none"/>
</g>
<!-- log scroll -->
<g transform="translate(335,517)">
 <path d="M2 1 H11 L11.5 3 L6 9 H10.5 L10 11 H1 L0.5 9 L6 3 H2.5 Z" fill="url(#gGold)" stroke="#8a6a20" stroke-width=".7"/>
</g>
<!-- ladybug -->
<g transform="translate(389,517)">
 <path d="M3 3l2 2M13 3l-2 2M1 8h3M15 8h-3M2 12l2-1.5M14 12l-2-1.5" stroke="#303030" stroke-width=".9"/>
 <circle cx="8" cy="8.5" r="5.3" fill="url(#gBug)"/>
 <path d="M4.5 5 C6 3 10 3 11.5 5 Z" fill="#202020"/>
 <circle cx="6" cy="8" r=".9" fill="#400"/><circle cx="10" cy="8" r=".9" fill="#400"/><circle cx="7" cy="11" r=".8" fill="#400"/><circle cx="9.5" cy="11" r=".8" fill="#400"/>
 <path d="M8 5v8.5" stroke="#700" stroke-width=".6"/>
</g>
<!-- search result -->
<g transform="translate(479,516)">
 <path d="M2.5 0.5h8l3 3v12h-11z" fill="#dce8fa" stroke="#6a88c8"/>
 <circle cx="8" cy="7" r="3.5" fill="#e8f8ff" stroke="#3a78c8" stroke-width="1.4"/>
 <path d="M5.5 9.5 L2 13" stroke="#f07020" stroke-width="2"/>
</g>
<!-- status grip -->
<path d="M815 561 L827 549 M819 561 L827 553 M823 561 L827 557" stroke="#fff" stroke-width="1"/>
<path d="M816 561 L827 550 M820 561 L827 554 M824 561 L827 558" stroke="#808080" stroke-width="1"/>
</svg>

</body></html>
